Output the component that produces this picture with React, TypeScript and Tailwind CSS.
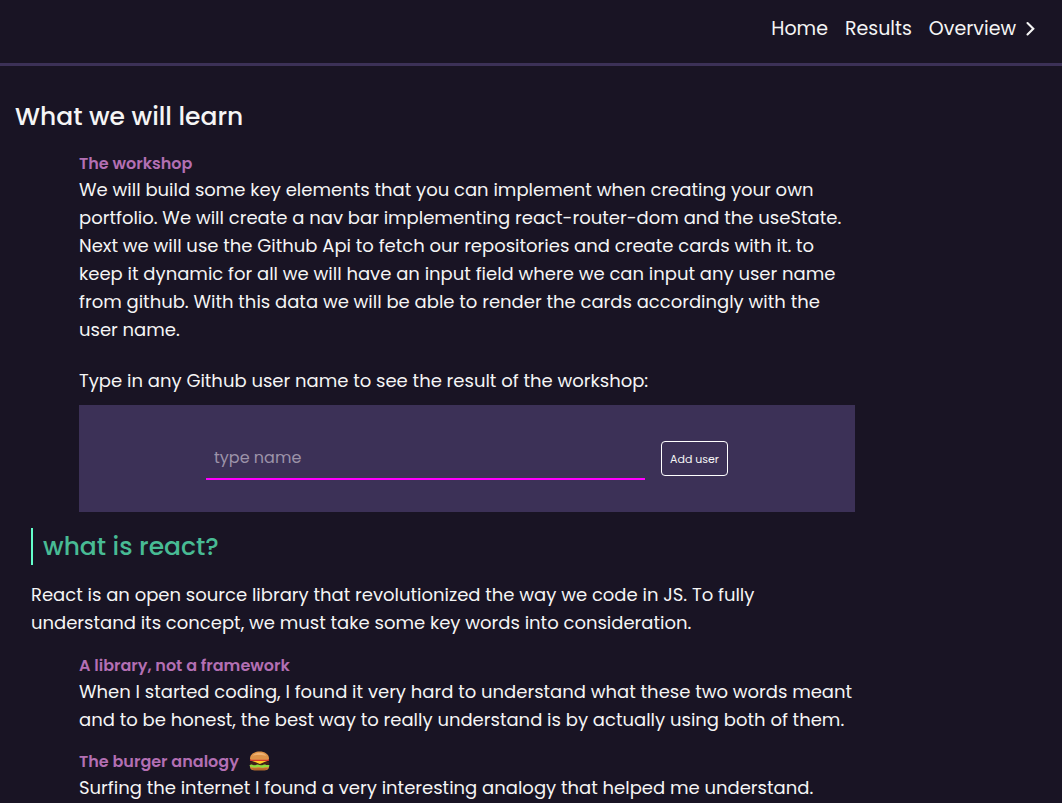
import type { ReactNode } from "react";

function Chevron() {
  return (
    <svg viewBox="0 0 20 20" className="size-5" fill="none" stroke="currentColor" strokeWidth="2.1" aria-hidden="true">
      <path d="M7.500 4 13.300 9.700 7.500 15.500" strokeLinecap="round" />
    </svg>
  );
}

function Burger() {
  return (
    <svg viewBox="0 0 21 20" className="ml-2.5 inline-block h-5 w-[21px] align-[-4px]" role="img" aria-label="burger">
      <path d="M1 14.500h19v1.600c0 2-1.600 3.100-3.800 3.100H4.800C2.600 19.200 1 18.100 1 16.100z" fill="#d98a3d" />
      <path d="M2 17.300c1 1.500 2.200 1.900 3.600 1.900h9.800c1.400 0 2.600-.4 3.600-1.900z" fill="#b5652a" />
      <rect x=".9" y="10.300" width="19.200" height="4" rx="1.800" fill="#40201a" />
      <path d="M.6 14.200c1-1 2-.8 3.200-.3 1.300.6 2 .5 3.300 0 1.400-.6 2.300-.4 3.500.1 1.300.5 2.100.4 3.400-.1 1.300-.5 2-.4 3.200.1 1.100.4 2-.6 3.200.3.200 1.300-1 2-2.400 1.800-1.300-.2-1.900-.1-3 .3-1.500.5-2.500.3-3.900-.1-1.300-.4-2.300-.3-3.500.1-1.400.4-2.500.2-3.600-.2C2.700 15.900.6 16.200.6 14.200z" fill="#8fdc3c" />
      <path d="M1.500 9.600h18l-4.600 1.600-4 1.900-4.200-1.900z" fill="#ffc928" />
      <rect x=".9" y="8.100" width="19.200" height="1.900" rx=".9" fill="#d9362c" />
      <path d="M1 7.600C1 3.300 5.200.6 10.500.6S20 3.300 20 7.600c0 .7-.5 1.100-1.300 1.100H2.300C1.500 8.700 1 8.300 1 7.600z" fill="#dd9348" />
      <path d="M3.600 4.900C5 2.800 7.400 1.800 10.500 1.800s5.500 1 6.900 3.100c-2-.8-4.200-1-6.900-1s-4.900.2-6.900 1z" fill="#efb273" />
    </svg>
  );
}

function Topic({ title, children }: { title: ReactNode; children: ReactNode }) {
  return (
    <section className="mb-[15px] ml-12 text-lg leading-7">
      <h3 className="text-base leading-[25px] font-semibold text-[#b36fb3]">{title}</h3>
      {children}
    </section>
  );
}

export default function App() {
  return (
    <div className="min-h-screen bg-[#191424] font-['Poppins','Inter',sans-serif] text-[#f5f5f5]">
      <nav className="flex justify-end gap-[17px] border-b-3 border-[#3c3157] px-[22px] pt-[15px] pb-5 text-[19px] leading-7">
        <a href="#home">Home</a>
        <a href="#results">Results</a>
        <a href="#overview" className="flex items-center gap-1">
          Overview
          <Chevron />
        </a>
      </nav>
      <main className="pt-8">
        <h1 className="px-[15px] text-[25px] leading-[37px] font-medium">What we will learn</h1>
        <div className="ml-[31px] mr-[207px] pt-4">
          <Topic title="The workshop">
            <p>
              We will build some key elements that you can implement when creating your own
              portfolio. We will create a nav bar implementing react-router-dom and the useState.
              Next we will use the Github Api to fetch our repositories and create cards with it. to
              keep it dynamic for all we will have an input field where we can input any user name
              from github. With this data we will be able to render the cards accordingly with the
              user name.
            </p>
            <label htmlFor="username" className="mt-[23px] mb-2.5 block">
              Type in any Github user name to see the result of the workshop:
            </label>
            <form className="flex items-center justify-center gap-4 bg-[#3c3157] py-8" onSubmit={(e) => e.preventDefault()}>
              <input
                id="username"
                type="text"
                placeholder="type name"
                className="h-[43px] w-[439px] border-b-2 border-[#ff00ff] bg-transparent px-2 text-base outline-none placeholder:text-[#9c93a9]"
              />
              <button type="submit" className="h-[35px] rounded border border-white px-2 text-[11px]">
                Add user
              </button>
            </form>
          </Topic>
          <h2 className="mt-4 border-l-2 border-[#64ffcb] pl-2.5 text-[25px] leading-[37px] font-medium text-[#48bb94]">
            what is react?
          </h2>
          <p className="mt-4 mb-4 text-lg leading-7">
            React is an open source library that revolutionized the way we code in JS. To fully
            understand its concept, we must take some key words into consideration.
          </p>
          <Topic title="A library, not a framework">
            <p>
              When I started coding, I found it very hard to understand what these two words meant
              and to be honest, the best way to really understand is by actually using both of them.
            </p>
          </Topic>
          <Topic title={<>The burger analogy<Burger /></>}>
            <p>Surfing the internet I found a very interesting analogy that helped me understand.</p>
          </Topic>
        </div>
      </main>
    </div>
  );
}
